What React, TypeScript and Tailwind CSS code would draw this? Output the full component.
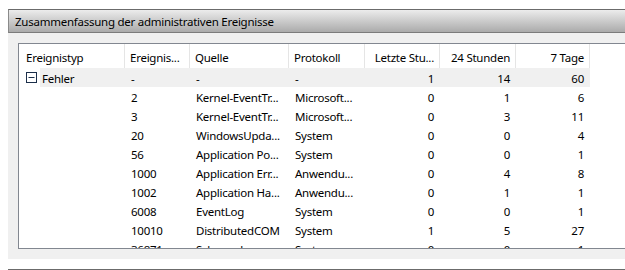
import React from "react";

const cols = "grid grid-cols-[106px_65px_99px_76px_75px_76px_74px]";

const rows = [
  ["2", "Kernel-EventTr...", "Microsoft...", "0", "1", "6"],
  ["3", "Kernel-EventTr...", "Microsoft...", "0", "3", "11"],
  ["20", "WindowsUpda...", "System", "0", "0", "4"],
  ["56", "Application Po...", "System", "0", "0", "1"],
  ["1000", "Application Err...", "Anwendu...", "0", "4", "8"],
  ["1002", "Application Ha...", "Anwendu...", "0", "1", "1"],
  ["6008", "EventLog", "System", "0", "0", "1"],
  ["10010", "DistributedCOM", "System", "1", "5", "27"],
  ["36871", "Schannel", "System", "0", "0", "1"],
];

function MinusBox() {
  return (
    <svg width="11" height="11" viewBox="0 0 11 11" className="block">
      <rect x="0.5" y="0.5" width="10" height="10" fill="white" stroke="#1c2f4a" />
      <line x1="2.5" y1="5.5" x2="8.5" y2="5.5" stroke="#1c2f4a" />
    </svg>
  );
}

export default function App() {
  return (
    <div className="w-[625px] h-[270px] overflow-hidden bg-white text-black text-[11.5px] tracking-[-0.25px] font-['Noto_Sans',sans-serif]">
      <div className="pt-[9px] pl-[8px] w-[680px]">
        {/* section header */}
        <div className="h-[24px] border-t border-b border-l border-t-[#6b6b6b] border-b-[#7c7c7c] border-l-[#8a8a8a] bg-gradient-to-b from-[#ececec] to-[#ababab] flex items-center pl-[6px] pt-[1px]">
          Zusammenfassung der administrativen Ereignisse
        </div>

        {/* panel */}
        <div className="h-[226px] bg-[#f0f0f0] pt-[10px] pl-[10px]">
          <div className="h-[206px] border border-[#828790] bg-white overflow-hidden">
            {/* column header */}
            <div className={`${cols} h-[24px]`}>
              <div className="border-r border-[#e5e5e5] flex items-center pl-[7px] pt-[3px]">Ereignistyp</div>
              <div className="border-r border-[#e5e5e5] flex items-center pl-[5px] pt-[3px]">Ereignis...</div>
              <div className="border-r border-[#e5e5e5] flex items-center pl-[5px] pt-[3px]">Quelle</div>
              <div className="border-r border-[#e5e5e5] flex items-center pl-[5px] pt-[3px]">Protokoll</div>
              <div className="border-r border-[#e5e5e5] flex items-center justify-end pr-[5px] pt-[3px]">Letzte Stu...</div>
              <div className="border-r border-[#e5e5e5] flex items-center justify-end pr-[5px] pt-[3px]">24 Stunden</div>
              <div className="border-r border-[#e5e5e5] flex items-center justify-end pr-[5px] pt-[3px]">7 Tage</div>
            </div>

            {/* group row */}
            <div className={`${cols} h-[19px]`}>
              <div className="flex">
                <div className="w-[21px] flex items-center pl-[7px]">
                  <MinusBox />
                </div>
                <div className="flex-1 bg-[#f0f0f0] flex items-center pl-[2px] pt-[2px]">Fehler</div>
              </div>
              <div className="bg-[#f0f0f0] flex items-center pl-[6px] pt-[2px]">-</div>
              <div className="bg-[#f0f0f0] flex items-center pl-[6px] pt-[2px]">-</div>
              <div className="bg-[#f0f0f0] flex items-center pl-[6px] pt-[2px]">-</div>
              <div className="bg-[#f0f0f0] flex items-center justify-end pr-[6px] pt-[2px]">1</div>
              <div className="bg-[#f0f0f0] flex items-center justify-end pr-[6px] pt-[2px]">14</div>
              <div className="bg-[#f0f0f0] flex items-center justify-end pr-[6px] pt-[2px]">60</div>
            </div>

            {rows.map((r) => (
              <div key={r[0]} className={`${cols} h-[19px] pt-[2px]`}>
                <div />
                <div className="flex items-center pl-[6px] whitespace-nowrap">{r[0]}</div>
                <div className="flex items-center pl-[6px] whitespace-nowrap">{r[1]}</div>
                <div className="flex items-center pl-[6px] whitespace-nowrap">{r[2]}</div>
                <div className="flex items-center justify-end pr-[6px]">{r[3]}</div>
                <div className="flex items-center justify-end pr-[6px]">{r[4]}</div>
                <div className="flex items-center justify-end pr-[6px]">{r[5]}</div>
              </div>
            ))}
          </div>
        </div>

        {/* next section header top edge */}
        <div className="h-[10px]" />
        <div className="border-t border-[#6b6b6b]" />
      </div>
    </div>
  );
}
